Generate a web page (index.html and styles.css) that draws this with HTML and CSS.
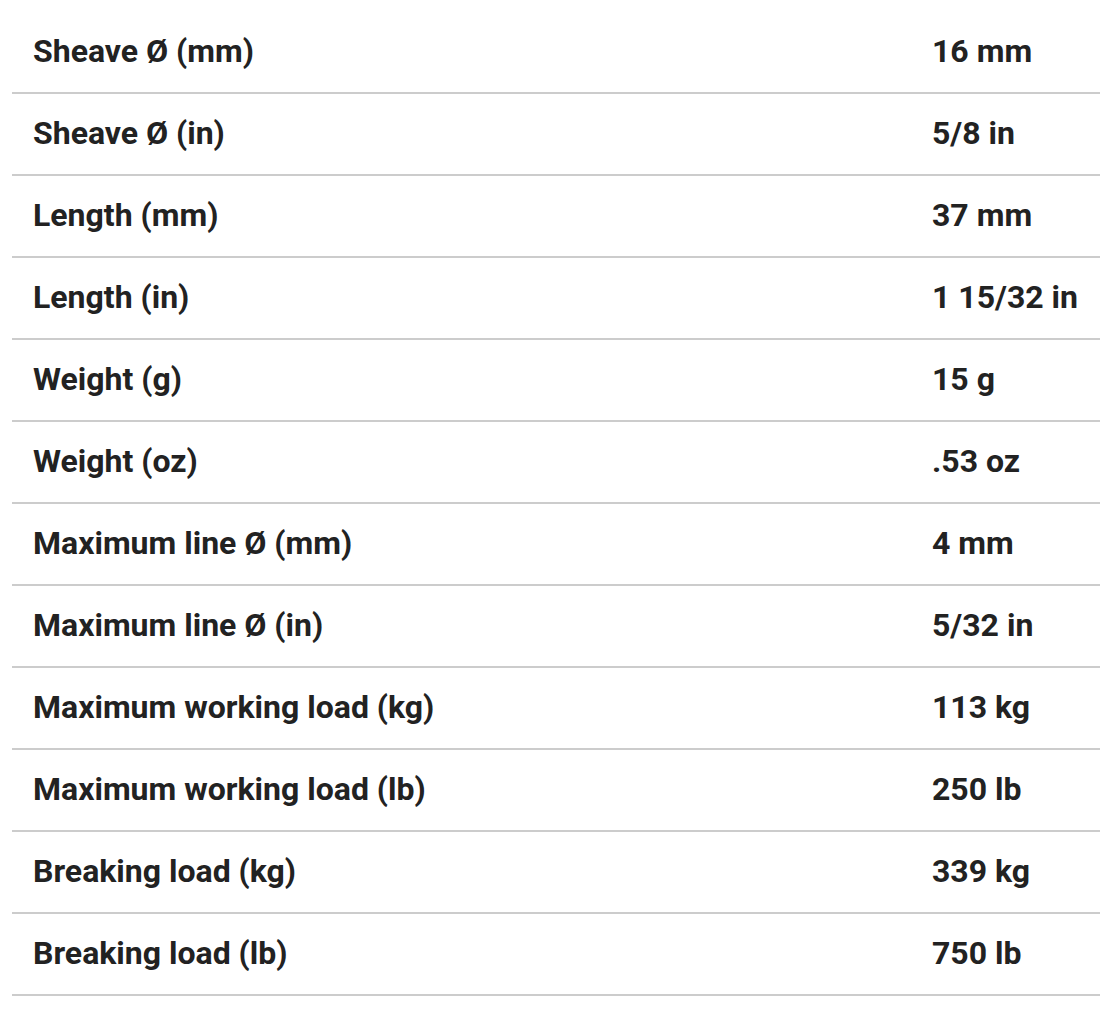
FILE: index.html
```html
<!DOCTYPE html>
<html>
<head>
<meta charset="utf-8">
<link rel="stylesheet" href="styles.css">
</head>
<body>
<table class="specs">
<tbody>
<tr><th>Sheave Ø (mm)</th><td>16 mm</td></tr>
<tr><th>Sheave Ø (in)</th><td>5/8 in</td></tr>
<tr><th>Length (mm)</th><td>37 mm</td></tr>
<tr><th>Length (in)</th><td>1 15/32 in</td></tr>
<tr><th>Weight (g)</th><td>15 g</td></tr>
<tr><th>Weight (oz)</th><td>.53 oz</td></tr>
<tr><th>Maximum line Ø (mm)</th><td>4 mm</td></tr>
<tr><th>Maximum line Ø (in)</th><td>5/32 in</td></tr>
<tr><th>Maximum working load (kg)</th><td>113 kg</td></tr>
<tr><th>Maximum working load (lb)</th><td>250 lb</td></tr>
<tr><th>Breaking load (kg)</th><td>339 kg</td></tr>
<tr><th>Breaking load (lb)</th><td>750 lb</td></tr>
</tbody>
</table>
</body>
</html>
```
FILE: styles.css
```css
html, body {
  margin: 0;
  padding: 0;
  background: #fff;
}
body {
  padding: 11px 0 0 12px;
  overflow: hidden;
}
.specs {
  border-collapse: collapse;
  width: 1088px;
  font-family: Roboto, "Liberation Sans", sans-serif;
  font-weight: 700;
  font-size: 32px;
  color: #222;
  table-layout: fixed;
}
.specs tr {
  height: 82px;
  border-bottom: 2px solid #ccc;
}
.specs th, .specs td {
  padding: 0 0 2px 21px;
  text-align: left;
  vertical-align: middle;
  font-weight: 700;
  white-space: nowrap;
}
.specs th {
  width: 878px;
}
```
